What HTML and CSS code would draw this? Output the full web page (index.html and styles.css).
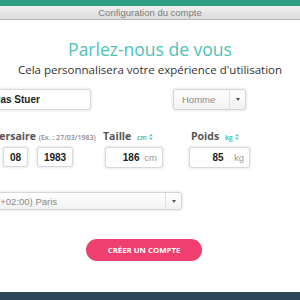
FILE: index.html
```html
<!DOCTYPE html>
<html lang="fr">
  <head>
    <meta charset="utf-8" />
    <title>Configuration du compte</title>
    <link rel="stylesheet" href="styles.css">
  </head>

  <body>
    <div class="window">
      <div class="titlebar">Configuration du compte</div>

      <div class="content">
        <h1 class="title">Parlez-nous de vous</h1>
        <p class="subtitle">Cela personnalisera votre expérience d'utilisation</p>

        <div class="form">
          <!-- Name + gender -->
          <div class="row row-identity">
            <input class="field name-field" type="text" value="Nicolas Stuer" />
            <div class="select gender">
              <span class="select-value">Homme</span>
              <span class="select-caret"></span>
            </div>
          </div>

          <!-- Birthday, height, weight -->
          <div class="row row-measures">
            <div class="group date-group">
              <div class="label">Anniversaire <span class="hint">(Ex. : 27/03/1983)</span></div>
              <div class="boxes">
                <input class="field box day" type="text" value="27" />
                <input class="field box month" type="text" value="08" />
                <input class="field box year" type="text" value="1983" />
              </div>
            </div>

            <div class="group height-group">
              <div class="label">Taille <span class="unit">cm <svg class="sort" viewBox="0 0 5 8"><path d="M2.5 0L5 3H0z M2.5 8L0 5h5z"/></svg></span></div>
              <div class="field unit-box height-box">
                <span class="unit-value">186</span>
                <span class="unit-suffix">cm</span>
              </div>
            </div>

            <div class="group weight-group">
              <div class="label">Poids <span class="unit">kg <svg class="sort" viewBox="0 0 5 8"><path d="M2.5 0L5 3H0z M2.5 8L0 5h5z"/></svg></span></div>
              <div class="field unit-box weight-box">
                <span class="unit-value">85</span>
                <span class="unit-suffix">kg</span>
              </div>
            </div>
          </div>

          <!-- Timezone -->
          <div class="row row-timezone">
            <div class="select timezone">
              <span class="select-value">(GMT+02:00) Paris</span>
              <span class="select-caret"></span>
            </div>
          </div>
        </div>

        <button class="submit">CRÉER UN COMPTE</button>
      </div>
    </div>
  </body>
</html>
```

FILE: styles.css
```css
body {
  margin: 0;
  padding: 0;
  width: 300px;
  height: 300px;
  overflow: hidden;
  background: linear-gradient(180deg, #2f9f80 0%, #2b8a84 40%, #2f5566 80%, #2c4658 100%);
  font-family: "Open Sans", Arial, sans-serif;
}

.window {
  margin-top: 6px;
  height: 286px;
  background-color: white;
  overflow: hidden;
}

.titlebar {
  height: 13px;
  line-height: 13px;
  text-align: center;
  font-family: "Liberation Sans", Arial, sans-serif;
  font-size: 9.5px;
  color: #7d7d7d;
  background: linear-gradient(180deg, #f0f0f0, #dcdcdc);
  border-bottom: 1px solid #b4b4b4;
}

.content {
  display: flex;
  flex-direction: column;
}

.title {
  margin: 18px 0 0 0;
  font-size: 17.5px;
  line-height: 22px;
  font-weight: 400;
  color: #4fc2b6;
  text-align: center;
}

.subtitle {
  margin: 3px 0 0 0;
  font-size: 11.5px;
  line-height: 14px;
  color: #333;
  text-align: center;
}

.form {
  margin-left: -31px;
  display: flex;
  flex-direction: column;
}

.row {
  display: flex;
}

.row-identity {
  margin-top: 12px;
  gap: 82px;
}

.field {
  box-sizing: border-box;
  border: 1px solid #d9d9d9;
  border-radius: 3px;
  box-shadow: 0 0 0 1.5px #f1f1f1;
  background-color: white;
  font-family: "Liberation Sans", Arial, sans-serif;
  font-weight: bold;
  font-size: 10px;
  color: #222;
  outline: none;
  margin: 0;
}

.name-field {
  width: 122px;
  height: 21px;
  padding: 0 6px;
}

.select {
  box-sizing: border-box;
  height: 21px;
  display: flex;
  align-items: center;
  border: 1px solid #d6d6d6;
  border-radius: 3px;
  box-shadow: 0 0 0 1.5px #f1f1f1;
  background: linear-gradient(180deg, #ffffff, #f2f2f2);
  font-family: "Liberation Sans", Arial, sans-serif;
  font-size: 9.5px;
  color: #8a8a8a;
}

.select-value {
  flex: 1;
  padding-left: 8px;
  white-space: nowrap;
}

.select-caret {
  width: 15px;
  height: 100%;
  border-left: 1px solid #e2e2e2;
  display: flex;
  align-items: center;
  justify-content: center;
}

.select-caret::after {
  content: "";
  border-left: 2.5px solid transparent;
  border-right: 2.5px solid transparent;
  border-top: 3px solid #555;
}

.gender {
  width: 73px;
}

.row-measures {
  margin-top: 20px;
}

.group {
  display: flex;
  flex-direction: column;
  gap: 5px;
}

.date-group {
  width: 134px;
}

.height-group {
  width: 88px;
}

.label {
  height: 12px;
  font-size: 10.5px;
  line-height: 12px;
  font-weight: bold;
  color: #555;
  white-space: nowrap;
}

.hint {
  font-size: 7px;
  font-weight: 600;
  color: #8c8c8c;
}

.unit {
  margin-left: 3px;
  font-size: 6.5px;
  font-weight: bold;
  color: #4fc2c2;
}

.sort {
  width: 4px;
  height: 6px;
  fill: #4fc2c2;
  margin-left: 1px;
}

.boxes {
  display: flex;
  gap: 9px;
}

.box {
  height: 20px;
  padding: 0;
  text-align: center;
}

.day,
.month {
  width: 25px;
}

.year {
  width: 36px;
}

.unit-box {
  height: 21px;
  display: flex;
  align-items: center;
  padding: 0 5px 0 12px;
}

.height-box {
  margin-left: 2px;
  width: 58px;
}

.unit-value {
  flex: 1;
  text-align: center;
}

.unit-suffix {
  font-weight: normal;
  font-size: 9.5px;
  color: #999;
}

.weight-box {
  margin-left: -2px;
  width: 61px;
}

.row-timezone {
  margin-top: 24px;
}

.timezone {
  width: 213px;
  height: 18px;
}

.timezone .select-value {
  padding-left: 6px;
}

.submit {
  align-self: flex-start;
  margin: 29px 0 0 86px;
  width: 116px;
  height: 22px;
  border: none;
  border-radius: 11px;
  background-color: #ef3f6e;
  color: white;
  font-family: "Open Sans", Arial, sans-serif;
  font-size: 7.8px;
  font-weight: bold;
  cursor: pointer;
}
```
